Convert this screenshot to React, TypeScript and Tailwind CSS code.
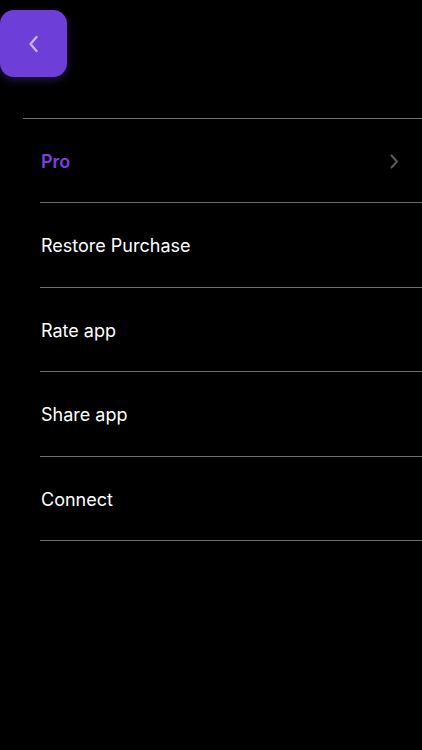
import React from 'react';

const items = ['Restore Purchase', 'Rate app', 'Share app', 'Connect'];

const App: React.FC = () => {
  return (
    <div
      className="w-[422px] h-[750px] bg-black flex flex-col overflow-hidden"
      style={{ fontFamily: 'Inter, "Noto Sans", sans-serif' }}
    >
      {/* Header with back button */}
      <div className="h-[118px] pt-[10px]">
        <button className="w-[67px] h-[67px] rounded-[14px] bg-[#6d3fd8] flex items-center justify-center shadow-[0_3px_8px_rgba(109,63,216,0.35)]">
          <svg width="14" height="20" viewBox="0 0 14 20" fill="none">
            <path d="M9.5 3 L3.5 10 L9.5 17" stroke="#c9b3f5" strokeWidth="2.4" strokeLinecap="round" strokeLinejoin="round" />
          </svg>
        </button>
      </div>

      <div className="ml-[23px] border-t border-[#6e6e6e]" />

      <div className="ml-10 flex flex-col">
        <div className="h-[84px] border-b border-[#6e6e6e] flex items-center justify-between pr-[23px] pt-[2px]">
          <span className="text-[18px] font-semibold text-[#7a3fe0] pl-px">Pro</span>
          <svg width="9" height="15" viewBox="0 0 9 15" fill="none">
            <path d="M1.5 1.5 L7 7.5 L1.5 13.5" stroke="#5c5c5c" strokeWidth="2" strokeLinecap="round" strokeLinejoin="round" />
          </svg>
        </div>
        {items.map((label) => (
          <div key={label} className="h-[84.5px] border-b border-[#6e6e6e] flex items-center pt-[2px]">
            <span className="text-[18px] text-white pl-px">{label}</span>
          </div>
        ))}
      </div>
    </div>
  );
};

export default App;
